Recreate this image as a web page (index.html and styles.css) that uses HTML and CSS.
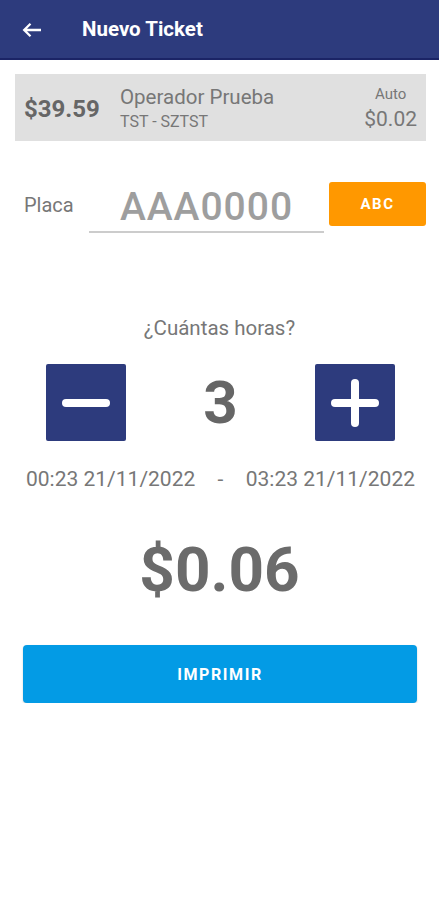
FILE: index.html
```html
<!DOCTYPE html>
<html lang="es">
<head>
  <meta charset="UTF-8" />
  <meta name="viewport" content="width=device-width, initial-scale=1.0"/>
  <title>Nuevo Ticket</title>

  <link rel="stylesheet" href="styles.css">
</head>
<body>

  <header class="topbar">
    <svg class="back" width="20" height="16" viewBox="0 0 20 16">
      <path d="M19 8H2.5 M8.5 1.8L2.2 8L8.5 14.2" stroke="#fff" stroke-width="2.3" fill="none"/>
    </svg>
    <h1 class="title">Nuevo Ticket</h1>
  </header>

  <div class="card">
    <div class="balance">$39.59</div>
    <div class="operator">
      <div class="op-name">Operador Prueba</div>
      <div class="op-zone">TST - SZTST</div>
    </div>
    <div class="rate">
      <div class="rate-type">Auto</div>
      <div class="rate-price">$0.02</div>
    </div>
  </div>

  <div class="plate-row">
    <label class="plate-label" for="plate">Placa</label>
    <input class="plate-input" id="plate" type="text" placeholder="AAA0000" />
    <button class="abc-btn" type="button">ABC</button>
  </div>

  <div class="hours-label">¿Cuántas horas?</div>

  <div class="stepper">
    <button class="step-btn" type="button" onclick="changeHours(-1)">
      <svg width="48" height="48" viewBox="0 0 48 48">
        <rect x="0" y="20" width="48" height="8" rx="4" fill="#fff"/>
      </svg>
    </button>
    <div class="hours" id="hours">3</div>
    <button class="step-btn" type="button" onclick="changeHours(1)">
      <svg width="48" height="48" viewBox="0 0 48 48">
        <rect x="0" y="20" width="48" height="8" rx="4" fill="#fff"/>
        <rect x="20" y="0" width="8" height="48" rx="4" fill="#fff"/>
      </svg>
    </button>
  </div>

  <div class="dates">
    <span>00:23 21/11/2022</span>
    <span>-</span>
    <span>03:23 21/11/2022</span>
  </div>

  <div class="total">$0.06</div>

  <button class="print-btn" type="button">IMPRIMIR</button>

  <script>
    function changeHours(delta) {
      const el = document.getElementById("hours");
      let value = parseInt(el.textContent) + delta;
      if (value < 1) value = 1;
      el.textContent = value;
    }
  </script>

</body>
</html>
```

FILE: styles.css
```css
body {
  margin: 0;
  font-family: Roboto, "Noto Sans", Arial, sans-serif;
  background: #fff;
  color: #666;
}

.topbar {
  height: 58px;
  background: #2d3b7d;
  border-bottom: 2px solid #1b2466;
  display: flex;
  align-items: center;
  padding-left: 22px;
}

.back {
  display: block;
  margin-top: 1px;
}

.title {
  margin: 0 0 0 40px;
  font-size: 20.5px;
  font-weight: bold;
  color: #fff;
}

.card {
  margin: 14px 13px 0 15px;
  height: 67px;
  background: #e0e0e0;
  display: flex;
  align-items: center;
  padding: 0 9px 0 9px;
  box-sizing: border-box;
}

.balance {
  font-size: 24px;
  font-weight: bold;
  color: #666;
  width: 96px;
  margin-top: 3px;
}

.operator {
  flex: 1;
  padding-top: 2px;
}

.op-name {
  font-size: 20.5px;
  color: #777;
  line-height: 24px;
}

.op-zone {
  font-size: 16px;
  color: #777;
  line-height: 20px;
  margin-top: 3px;
}

.rate {
  text-align: center;
  padding-top: 2px;
}

.rate-type {
  font-size: 15px;
  color: #777;
  line-height: 18px;
}

.rate-price {
  font-size: 21px;
  color: #777;
  line-height: 26px;
  margin-top: 3px;
}

.plate-row {
  display: flex;
  align-items: center;
  margin: 40px 13px 0 24px;
  height: 46px;
}

.plate-label {
  font-size: 20px;
  color: #777;
  width: 65px;
  margin-top: 2px;
}

.plate-input {
  width: 235px;
  border: none;
  border-bottom: 2px solid #ccc;
  font-family: inherit;
  font-size: 39px;
  font-weight: 500;
  letter-spacing: 1px;
  text-align: center;
  padding: 0;
  height: 48px;
  margin-top: 8px;
  outline: none;
  color: #999;
}

.plate-input::placeholder {
  color: #9e9e9e;
}

.abc-btn {
  margin-left: 5px;
  width: 97px;
  height: 44px;
  background: #ff9800;
  color: #fff;
  border: none;
  border-radius: 3px;
  font-family: inherit;
  font-size: 15px;
  font-weight: bold;
  letter-spacing: 1.5px;
}

.hours-label {
  text-align: center;
  font-size: 20.5px;
  line-height: 24px;
  color: #777;
  margin-top: 89px;
}

.stepper {
  display: flex;
  align-items: center;
  justify-content: space-between;
  height: 77px;
  margin: 24px 44px 0 46px;
}

.step-btn {
  width: 80px;
  height: 77px;
  background: #2d3b7d;
  border: none;
  border-radius: 2px;
  padding: 0;
  display: flex;
  align-items: center;
  justify-content: center;
}

.hours {
  font-size: 60px;
  line-height: 77px;
  font-weight: bold;
  color: #666;
}

.dates {
  display: flex;
  justify-content: space-between;
  margin: 26px 24px 0 26px;
  font-size: 21px;
  line-height: 24px;
  color: #777;
}

.total {
  text-align: center;
  font-size: 62px;
  line-height: 72px;
  font-weight: bold;
  color: #6b6b6b;
  margin-top: 43px;
}

.print-btn {
  display: block;
  margin: 39px 22px 0 23px;
  width: calc(100% - 45px);
  height: 58px;
  background: #039be5;
  color: #fff;
  border: none;
  border-radius: 4px;
  font-family: inherit;
  font-size: 16px;
  font-weight: bold;
  letter-spacing: 1.6px;
  box-shadow: 0 1px 2px rgba(0,0,0,0.2);
}
```
